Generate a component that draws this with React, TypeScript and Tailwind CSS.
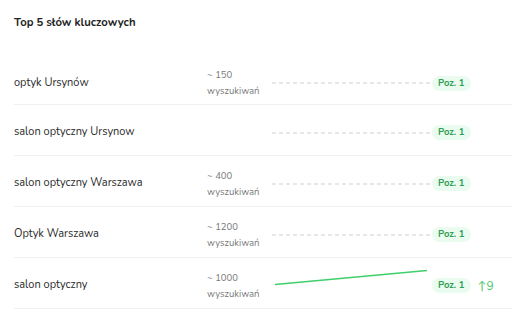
import React from "react";

type Row = { kw: string; vol?: string; trend?: boolean; delta?: string };

const rows: Row[] = [
  { kw: "optyk Ursynów", vol: "~ 150" },
  { kw: "salon optyczny Ursynow" },
  { kw: "salon optyczny Warszawa", vol: "~ 400" },
  { kw: "Optyk Warszawa", vol: "~ 1200" },
  { kw: "salon optyczny", vol: "~ 1000", trend: true, delta: "9" },
];

export default function App() {
  return (
    <div
      className="w-[512px] h-[324px] bg-white overflow-hidden"
      style={{ fontFamily: "Nunito, Lato, 'Noto Sans', sans-serif" }}
    >
      <div className="pl-[14px] pt-[16px] h-[54px]">
        <div className="text-[11.3px] leading-[14px] font-bold text-[#222]">Top 5 słów kluczowych</div>
      </div>
      <div className="pl-[14px]">
        {rows.map((r, i) => (
          <div
            key={i}
            className={
              "flex items-center h-[51px] border-b border-[#efefef] " + (i === 0 ? "pt-[8px]" : "pt-[5px]")
            }
          >
            <div className="w-[193px] text-[11px] text-[#2a2a2a]">{r.kw}</div>
            <div className="w-[65px] text-[9.5px] leading-[16px] text-[#777]">
              {r.vol && (
                <>
                  <div>{r.vol}</div>
                  <div>wyszukiwań</div>
                </>
              )}
            </div>
            <svg width="160" height="40" className="block">
              {r.trend ? (
                <line x1="3" y1="18.5" x2="155" y2="4.5" stroke="#3fcf6b" strokeWidth="1.6" />
              ) : (
                <line x1="0" y1="20" x2="158" y2="20" stroke="#cfcfcf" strokeWidth="1" strokeDasharray="4 3" />
              )}
            </svg>
            <div className="flex items-center gap-[7px]">
              <div className="h-[15px] px-[6px] rounded-full bg-[#eafbef] text-[9.5px] font-bold text-[#2f9e55] flex items-center">
                Poz. 1
              </div>
              {r.delta && (
                <div className="text-[12px] text-[#4cc46d] flex items-center">
                  <span>↑</span>
                  <span>{r.delta}</span>
                </div>
              )}
            </div>
          </div>
        ))}
      </div>
    </div>
  );
}
